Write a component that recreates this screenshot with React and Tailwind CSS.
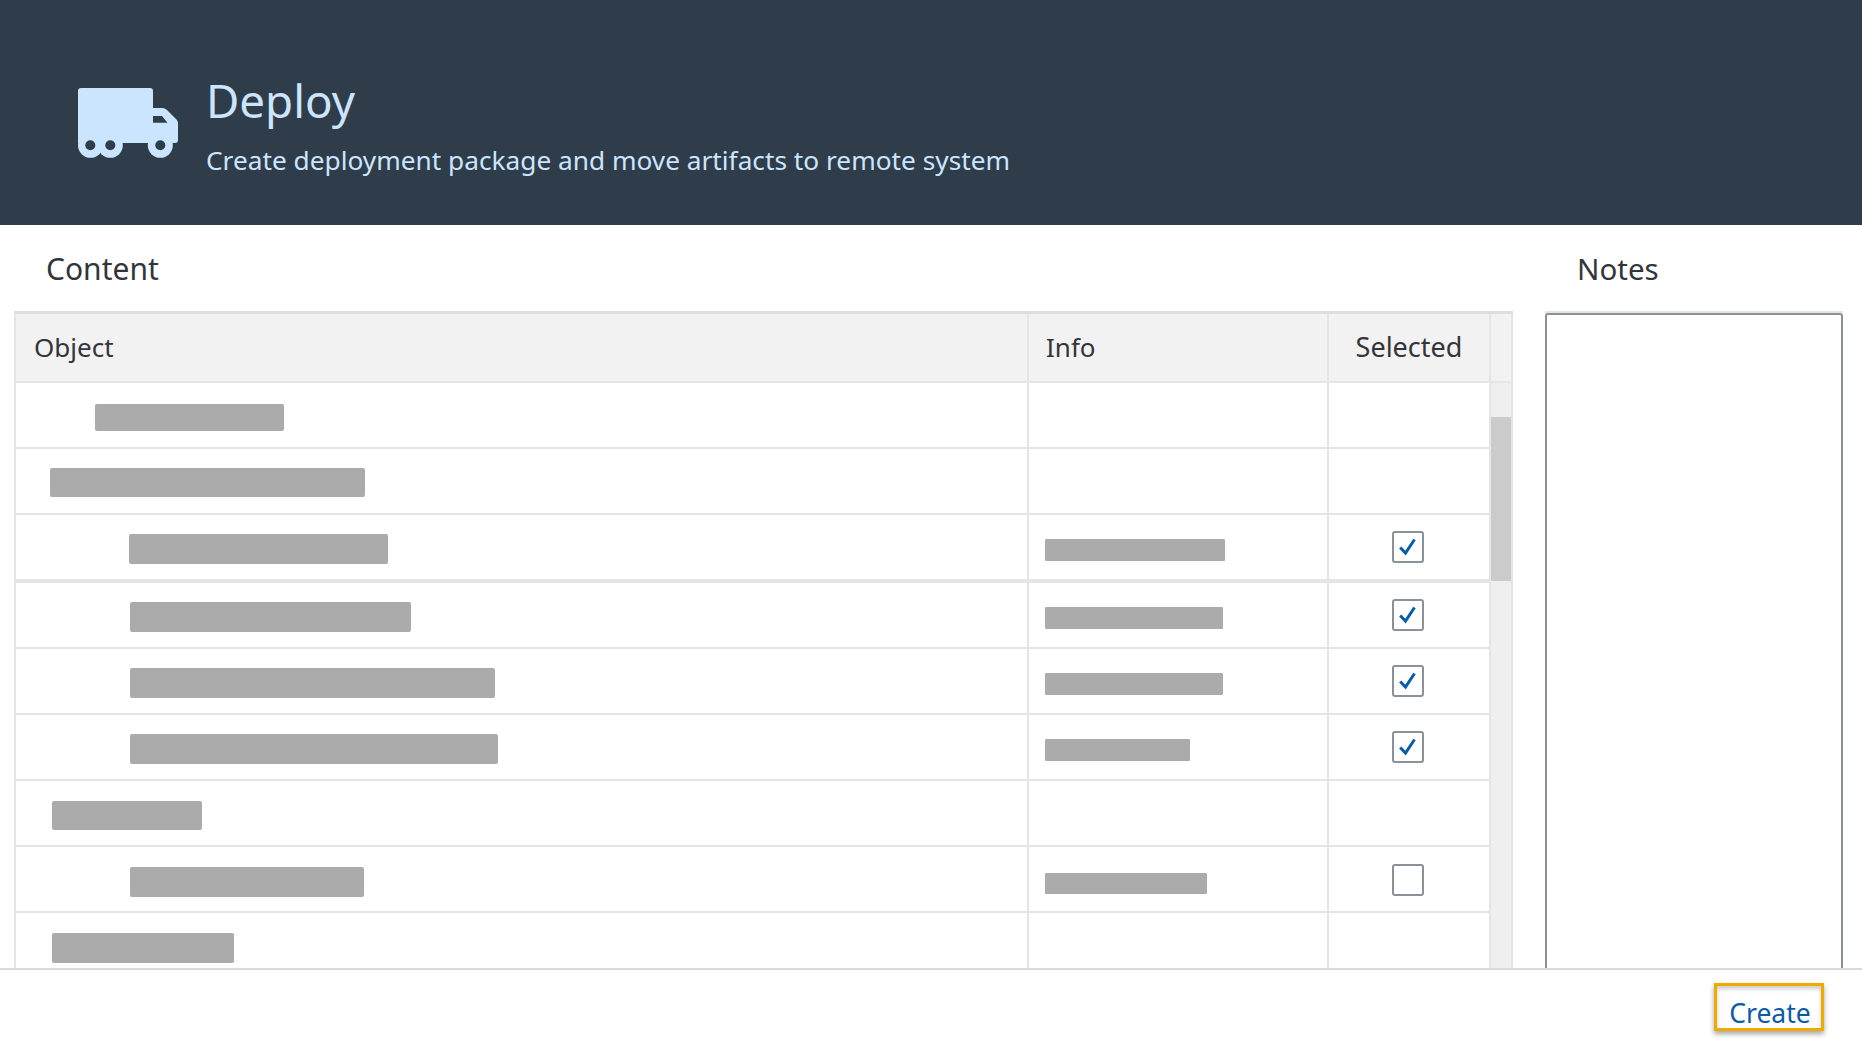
const rows = [
  { bar: [79, 189, 21, 27] },
  { bar: [34, 315, 19, 29] },
  { bar: [113, 259, 19, 30], info: [180, 24, 22], check: true, thick: true },
  { bar: [114, 281, 19, 30], info: [178, 24, 22], check: true },
  { bar: [114, 365, 19, 30], info: [178, 24, 22], check: true },
  { bar: [114, 368, 19, 30], info: [145, 24, 22], check: true },
  { bar: [36, 150, 20, 29] },
  { bar: [114, 234, 20, 30], info: [162, 26, 21], check: false, top: 17 },
  { bar: [36, 182, 20, 30] },
].map((r) => ({ ...r, h: r.thick ? 68 : 66 }));

function Truck() {
  return (
    <svg width="100" height="70" viewBox="0 0 100 70" className="shrink-0" aria-hidden="true">
      <path fill="#cce5ff" d="M3 0H72a3 3 0 0 1 3 3V20H84Q87 20 89 22L98.5 31.5Q100 33 100 35.5V52a3 3 0 0 1-3 3H0V3a3 3 0 0 1 3-3Z" />
      <circle cx="12.5" cy="57.3" r="12.5" fill="#cce5ff" />
      <circle cx="32.3" cy="57.3" r="12.5" fill="#cce5ff" />
      <circle cx="82.3" cy="57.3" r="12.5" fill="#cce5ff" />
      <circle cx="12.3" cy="57.3" r="5" fill="#2f3c49" />
      <circle cx="32.3" cy="57.3" r="5" fill="#2f3c49" />
      <circle cx="82.3" cy="57.3" r="5" fill="#2f3c49" />
      <path fill="#2f3c49" d="M75 28H84L89.5 34.7H75Z" />
    </svg>
  );
}

function Checkbox({ checked, top }) {
  return (
    <div className="flex h-8 w-8 items-center justify-center rounded-[3px] border-2 border-[#89919a] bg-white" style={{ marginTop: top }}>
      {checked && (
        <svg width="18" height="18" viewBox="0 0 18 18" aria-hidden="true">
          <path d="M1.2 9.5L6.5 15L15.5 1.5" fill="none" stroke="#0a5ba8" strokeWidth="3" />
        </svg>
      )}
    </div>
  );
}

export default function App() {
  return (
    <div className="h-[1038px] w-[1862px] overflow-hidden bg-white font-['Noto_Sans','Open_Sans',sans-serif] text-[#32363a]">
      <header className="flex h-[225px] items-start bg-[#2f3c49] pl-[78px] pt-[88px] text-[#cce5ff]">
        <Truck />
        <div className="ml-[28px] -mt-[16px]">
          <h1 className="text-[45.7px] leading-[56px] font-normal">Deploy</h1>
          <p className="mt-[13px] text-[26.25px] leading-[38px]">Create deployment package and move artifacts to remote system</p>
        </div>
      </header>

      <main className="flex h-[743px] overflow-hidden">
        <section className="w-[1513px] shrink-0 pl-[14px]">
          <h2 className="flex h-[86px] items-center pl-[32px] text-[30px] font-normal">Content</h2>
          <div className="flex border-t-[3px] border-[#dedede]">
            <div className="w-[1475px] shrink-0 border-l-2 border-[#e5e5e5]">
              <div className="flex h-[69px] border-b-2 border-[#e5e5e5] bg-[#f2f2f2] text-[26px]">
                <div className="flex w-[1013px] items-center border-r-2 border-[#e5e5e5] pl-[18px]">Object</div>
                <div className="flex w-[300px] items-center border-r-2 border-[#e5e5e5] pl-[17px]">Info</div>
                <div className="flex flex-1 items-center justify-center text-[27px]">Selected</div>
              </div>
              {rows.map((r, i) => (
                <div key={i} className={r.thick ? "flex border-b-4 border-[#e5e5e5]" : "flex border-b-2 border-[#e5e5e5]"} style={{ height: r.h }}>
                  <div className="w-[1013px] border-r-2 border-[#e5e5e5]">
                    <div className="rounded-[2px] bg-[#ababab]" style={{ marginLeft: r.bar[0], width: r.bar[1], marginTop: r.bar[2], height: r.bar[3] }} />
                  </div>
                  <div className="w-[300px] border-r-2 border-[#e5e5e5]">
                    {r.info && <div className="ml-[16px] rounded-[1px] bg-[#ababab]" style={{ width: r.info[0], marginTop: r.info[1], height: r.info[2] }} />}
                  </div>
                  <div className="flex flex-1 justify-center pr-[2px]">
                    {r.check !== undefined && <Checkbox checked={r.check} top={r.top ?? 16} />}
                  </div>
                </div>
              ))}
            </div>
            <div className="flex h-[700px] w-[24px] flex-col border-x-2 border-[#e5e5e5]">
              <div className="h-[69px] shrink-0 border-b-2 border-[#e5e5e5] bg-[#f2f2f2]" />
              <div className="flex-1 bg-[#efefef]">
                <div className="mt-[34px] h-[164px] bg-[#cbcbcb]" />
              </div>
            </div>
          </div>
        </section>

        <section className="flex-1">
          <h2 className="flex h-[86px] items-center pl-[64px] pt-[2px] text-[29.5px] font-normal">Notes</h2>
          <div className="ml-[32px] w-[298px] border-t-2 border-[#e5e5e5]">
            <div className="h-[700px] rounded-[3px] border-2 border-[#89919a] bg-white" />
          </div>
        </section>
      </main>

      <footer className="flex h-[70px] items-start justify-end border-t-2 border-[#d9d9d9] pr-[38px] pt-[13px]">
        <button className="flex h-[48px] w-[110px] items-center justify-center border-[3px] border-[#f0ab00] bg-white pl-[2px] pt-[13px] text-[26.5px] text-[#0a5ba8] shadow-[0_3px_5px_rgba(0,0,0,0.35),inset_0_3px_4px_rgba(0,0,0,0.2)]">
          Create
        </button>
      </footer>
    </div>
  );
}
